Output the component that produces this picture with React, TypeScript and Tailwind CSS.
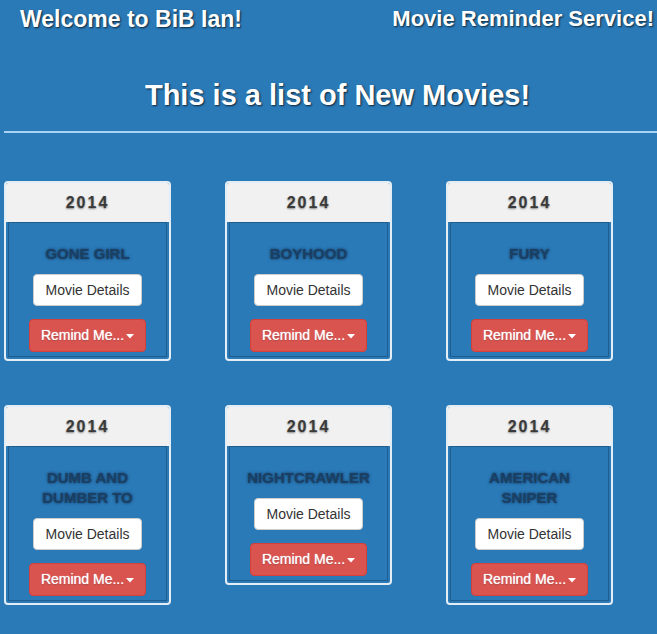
type Movie = { year: string; title: string };

const MOVIES: Movie[] = [
  { year: '2014', title: 'GONE GIRL' },
  { year: '2014', title: 'BOYHOOD' },
  { year: '2014', title: 'FURY' },
  { year: '2014', title: 'DUMB AND DUMBER TO' },
  { year: '2014', title: 'NIGHTCRAWLER' },
  { year: '2014', title: 'AMERICAN SNIPER' },
];

function MovieCard({ movie }: { movie: Movie }) {
  return (
    <div className="w-[167px] rounded-[4px] border-2 border-[#e3edf6] bg-[#2a7ab8]">
      <div className="flex h-[39px] items-center justify-center rounded-t-[2px] bg-[#f1f1f1] text-[16px] font-bold tracking-[2px] text-[#3a3a3a] [text-shadow:0_1px_2px_rgba(0,0,0,0.45)]">
        {movie.year}
      </div>
      <div className="px-[2px] pb-[2px]">
        <div className="flex flex-col items-center border border-[#1f5d8f] px-[11px] pb-[4px] pt-[21px]">
          <h3 className="text-center text-[15px] font-bold leading-[20px] text-[#1a3f63] [text-shadow:0_0_3px_rgba(10,30,60,0.8)]">
            {movie.title}
          </h3>
          <button
            type="button"
            className="mt-[10px] h-[32px] w-[109px] rounded-[4px] border border-[#ccc] bg-white text-[14px] text-[#333]"
          >
            Movie Details
          </button>
          <button
            type="button"
            className="mt-[13px] inline-flex h-[33px] w-[117px] items-center justify-center rounded-[4px] border border-[#d43f3a] bg-[#d9534f] text-[14px] text-white [text-shadow:0_0_1px_rgba(255,255,255,0.9),0_1px_1px_rgba(0,0,0,0.25)]"
          >
            Remind Me...
            <svg width="8" height="5" viewBox="0 0 8 5" className="ml-[2px] mt-[2px]" aria-hidden>
              <path d="M0 0h8L4 4.5z" fill="currentColor" />
            </svg>
          </button>
        </div>
      </div>
    </div>
  );
}

export default function App() {
  return (
    <div className="min-h-screen overflow-hidden bg-[#2a7ab8] font-['Liberation_Sans',Arial,sans-serif] text-white">
      <header className="flex items-center pt-[5px] font-bold leading-[28px] [text-shadow:1px_1px_2px_rgba(0,0,0,0.7)]">
        <span className="pl-[20px] text-[23px]">Welcome to BiB Ian!</span>
        <span className="ml-auto pr-[3px] text-[22px]">Movie Reminder Service!</span>
      </header>

      <h1 className="mt-[45px] pl-[18px] text-center text-[29px] font-bold leading-[34px] [text-shadow:1px_1px_2px_rgba(0,0,0,0.7)]">
        This is a list of New Movies!
      </h1>

      <hr className="ml-[4px] mt-[19px] border-0 border-t-2 border-[#a9d2f5]" />

      <div className="mt-[48px] grid grid-cols-[221px_221px_167px] items-start gap-y-[44px] pl-[4px]">
        {MOVIES.map((m) => (
          <MovieCard key={m.title} movie={m} />
        ))}
      </div>
    </div>
  );
}
